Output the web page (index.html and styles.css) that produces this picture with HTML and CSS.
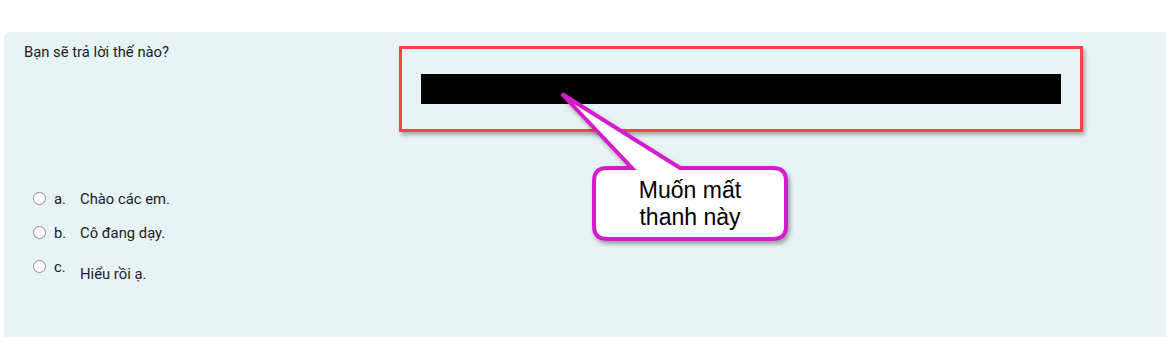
FILE: index.html
```html
<!DOCTYPE html>
<html lang="vi">
  <head>
    <meta charset="UTF-8" />
    <meta name="viewport" content="width=device-width, initial-scale=1.0" />
    <title>Câu hỏi</title>
    <link rel="stylesheet" href="styles.css">
  </head>
  <body>
    <div class="que">
      <div class="qtext-row">
        <div class="qtext">Bạn sẽ trả lời thế nào?</div>
        <div class="media-box">
          <div class="media-bar"></div>
        </div>
      </div>

      <!-- Answers -->
      <div class="answer">
        <label class="option">
          <span class="radio"></span>
          <span class="letter">a.</span>
          <span class="text">Chào các em.</span>
        </label>
        <label class="option">
          <span class="radio"></span>
          <span class="letter">b.</span>
          <span class="text">Cô đang dạy.</span>
        </label>
        <label class="option">
          <span class="radio"></span>
          <span class="letter">c.</span>
          <span class="text text-low">Hiểu rồi ạ.</span>
        </label>
      </div>
    </div>

    <!-- Callout annotation -->
    <svg class="callout-shape" width="260" height="170" viewBox="540 85 260 170">
      <defs>
        <filter id="shadow" x="-20%" y="-20%" width="140%" height="140%">
          <feDropShadow dx="2" dy="3" stdDeviation="2" flood-color="#000" flood-opacity="0.35" />
        </filter>
      </defs>
      <path
        d="M607 168 L632 168 L562 94 L680 168 L773 168 Q786 168 786 181 L786 226 Q786 239 773 239 L607 239 Q594 239 594 226 L594 181 Q594 168 607 168 Z"
        fill="#fff"
        stroke="#d51fcd"
        stroke-width="4"
        stroke-linejoin="miter"
        filter="url(#shadow)"
      />
    </svg>
    <div class="callout-text">Muốn mất<br />thanh này</div>
  </body>
</html>
```

FILE: styles.css
```css
body {
  margin: 0;
  background-color: white;
  font-family: Roboto, "Noto Sans", Arial, sans-serif;
  font-size: 14.8px;
  color: #1d2125;
}
.que {
  margin: 32px 0 0 4px;
  min-height: 305px;
  box-sizing: border-box;
  padding: 14px 0 0 20px;
  background-color: #e7f3f5;
  border-radius: 6px 0 0 0;
}
.qtext-row {
  display: flex;
  align-items: flex-start;
}
.qtext {
  width: 375px;
  line-height: 20px;
  margin-top: -4px;
}
.media-box {
  width: 640px;
  padding: 25px 19px;
  border: 3px solid #fb4347;
  box-shadow: 2px 3px 4px rgba(0, 0, 0, 0.3);
}
.media-bar {
  width: 640px;
  height: 30px;
  background-color: black;
}
.answer {
  margin-top: 57px;
  padding-left: 9px;
}
.option {
  display: flex;
  align-items: flex-start;
  height: 34px;
  line-height: 20px;
}
.radio {
  width: 11px;
  height: 11px;
  margin-top: 3px;
  border: 1px solid #8a8d90;
  border-radius: 50%;
  background-color: white;
  margin-right: 8px;
}
.letter {
  width: 26px;
}
.text-low {
  padding-top: 7px;
}
.callout-shape {
  position: absolute;
  left: 540px;
  top: 85px;
}
.callout-text {
  position: absolute;
  left: 594px;
  top: 168px;
  width: 192px;
  height: 71px;
  display: flex;
  align-items: center;
  justify-content: center;
  text-align: center;
  font-family: "Liberation Sans", Arial, sans-serif;
  font-size: 23px;
  line-height: 27px;
  color: black;
}
```
